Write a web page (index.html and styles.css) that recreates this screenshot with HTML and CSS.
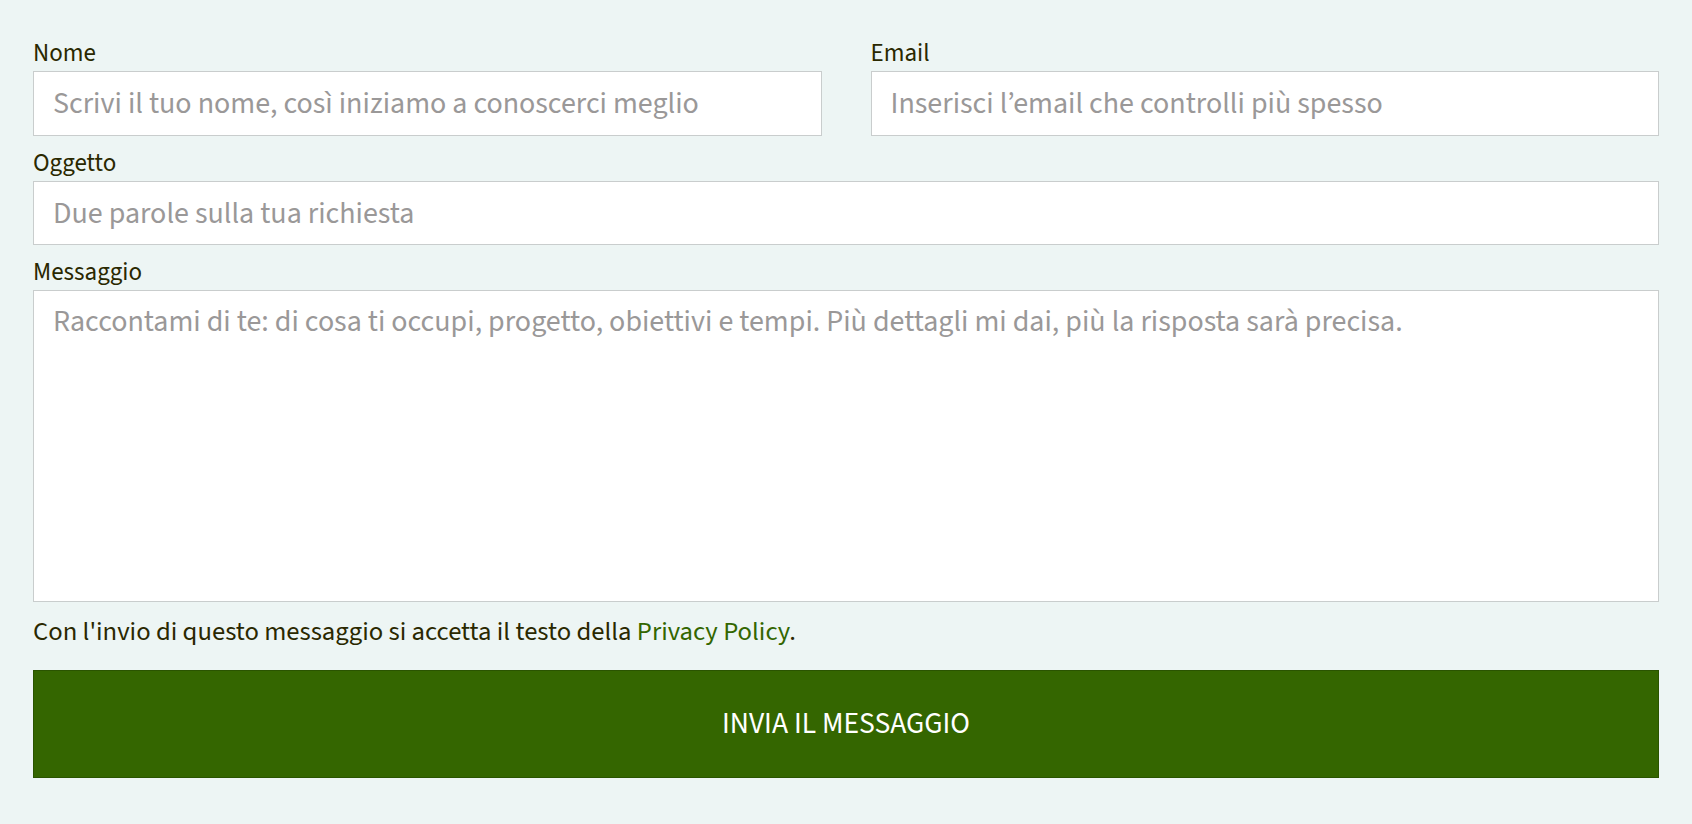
FILE: index.html
```html
<!DOCTYPE html>
<html lang="it">
<head>
<meta charset="utf-8">
<title>Contatti</title>
<link rel="stylesheet" href="styles.css">
</head>
<body>
<form class="contact-form">
  <div class="row-two">
    <div class="field">
      <label class="field-label" for="nome">Nome</label>
      <input class="field-input field-input-tall" id="nome" type="text" placeholder="Scrivi il tuo nome, così iniziamo a conoscerci meglio">
    </div>
    <div class="field">
      <label class="field-label" for="email">Email</label>
      <input class="field-input field-input-tall" id="email" type="email" placeholder="Inserisci l’email che controlli più spesso">
    </div>
  </div>
  <div class="field">
    <label class="field-label" for="oggetto">Oggetto</label>
    <input class="field-input" id="oggetto" type="text" placeholder="Due parole sulla tua richiesta">
  </div>
  <div class="field">
    <label class="field-label" for="messaggio">Messaggio</label>
    <textarea class="field-textarea" id="messaggio" placeholder="Raccontami di te: di cosa ti occupi, progetto, obiettivi e tempi. Più dettagli mi dai, più la risposta sarà precisa."></textarea>
  </div>
  <p class="privacy">Con l'invio di questo messaggio si accetta il testo della <a class="privacy-link" href="#">Privacy Policy</a>.</p>
  <button class="submit-btn" type="button">INVIA IL MESSAGGIO</button>
</form>
</body>
</html>
```
FILE: styles.css
```css
html, body {
  margin: 0;
  padding: 0;
  background: #edf5f4;
}
body {
  font-family: "Source Sans 3", "Source Sans Pro", Lato, sans-serif;
  color: #2a2800;
  width: 1692px;
  height: 824px;
  overflow: hidden;
}
.contact-form {
  display: flex;
  flex-direction: column;
  gap: 10px;
  padding: 36px 33px 0 33px;
}
.row-two {
  display: grid;
  grid-template-columns: 1fr 1fr;
  column-gap: 49px;
}
.field {
  display: flex;
  flex-direction: column;
}
.field-label {
  font-size: 25px;
  line-height: 35px;
  height: 35px;
  color: #2a2800;
}
.field-input,
.field-textarea {
  box-sizing: border-box;
  width: 100%;
  margin: 0;
  background: #fff;
  border: 1px solid #c9cdcd;
  border-radius: 0;
  font-family: inherit;
  font-size: 30px;
  color: #333;
  padding: 0 19px;
  outline: none;
}
.field-input {
  height: 64px;
}
.field-input-tall {
  height: 65px;
}
.field-textarea {
  height: 312px;
  padding: 9px 19px;
  resize: none;
  line-height: normal;
}
.field-input::placeholder,
.field-textarea::placeholder {
  color: #9a9898;
  opacity: 1;
}
.privacy {
  margin: 0;
  font-size: 26.67px;
  line-height: 40px;
  color: #2a2800;
}
.privacy-link {
  color: #336600;
  text-decoration: none;
}
.submit-btn {
  margin-top: 8px;
  box-sizing: border-box;
  width: 100%;
  height: 108px;
  background: #346600;
  border: 1px solid #2a5400;
  border-radius: 0;
  color: #fff;
  font-family: inherit;
  font-size: 29.6px;
  cursor: pointer;
  padding: 0;
}
```
